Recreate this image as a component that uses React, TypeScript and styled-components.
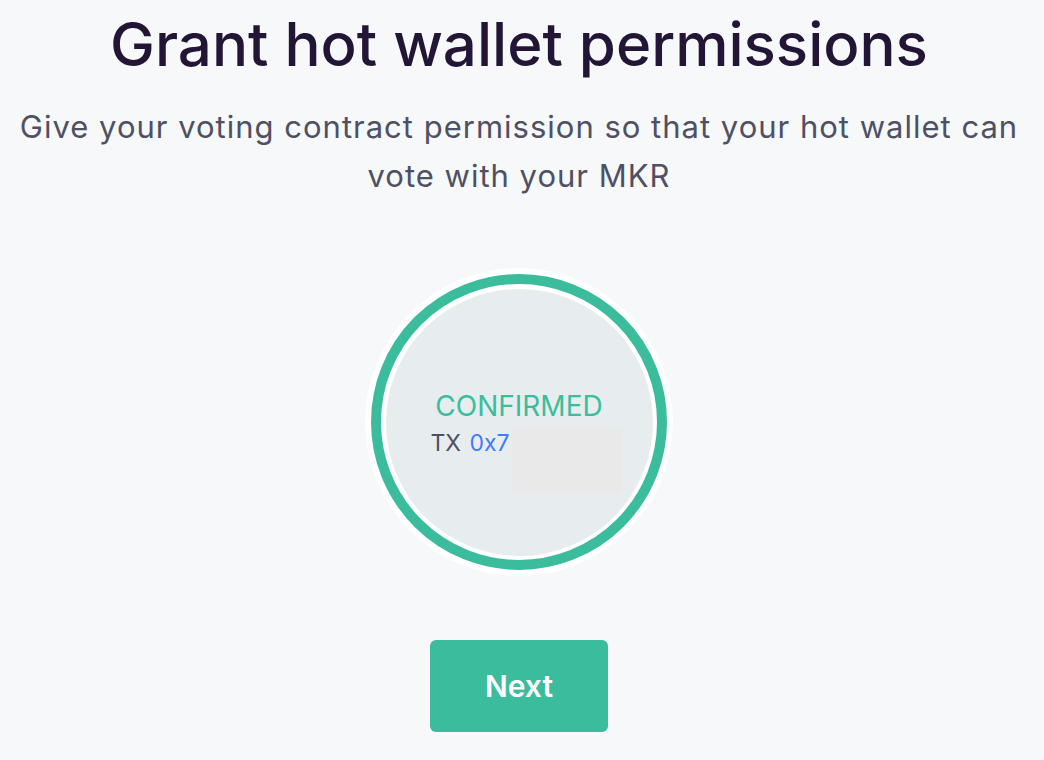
import React from "react";
import styled, { createGlobalStyle } from "styled-components";

const Global = createGlobalStyle`
  html, body { margin: 0; padding: 0; background: #f6f8f9; }
  body { font-family: Inter, "Noto Sans", sans-serif; }
`;

const Page = styled.main`
  box-sizing: border-box;
  width: 1044px;
  height: 760px;
  padding-right: 6px;
  overflow: hidden;
  display: flex;
  flex-direction: column;
  align-items: center;
  background: #f6f8f9;
`;

const Title = styled.h1`
  margin: 8px 0 0;
  font-size: 60px;
  line-height: 72px;
  font-weight: 500;
  color: #231536;
  letter-spacing: 0px;
  text-align: center;
  white-space: nowrap;
`;

const Subtitle = styled.p`
  margin: 22px 0 0;
  width: 1010px;
  font-size: 31px;
  line-height: 49px;
  font-weight: 400;
  color: #4f5063;
  letter-spacing: 1px;
  text-align: center;
`;

const Halo = styled.div`
  margin-top: 68px;
  width: 308px;
  height: 308px;
  border-radius: 50%;
  background: #ffffff;
  display: flex;
  align-items: center;
  justify-content: center;
`;

const Ring = styled.div`
  width: 276px;
  height: 276px;
  border-radius: 50%;
  border: 10px solid #3bbd9d;
  display: flex;
  align-items: center;
  justify-content: center;
`;

const Core = styled.div`
  box-sizing: border-box;
  width: 267px;
  height: 267px;
  border-radius: 50%;
  background: #e7edee;
  padding-top: 100px;
  display: flex;
  flex-direction: column;
  align-items: center;
`;

const Status = styled.div`
  font-size: 28px;
  line-height: 34px;
  font-weight: 400;
  color: #3bbd9d;
`;

const TxRow = styled.div`
  position: relative;
  align-self: flex-start;
  margin-left: 45px;
  margin-top: 6px;
  font-size: 23px;
  line-height: 28px;
  color: #4f5063;
  white-space: pre;
`;

const TxLink = styled.a`
  margin-left: 2px;
  color: #447afb;
  text-decoration: none;
`;

const Redaction = styled.span`
  position: absolute;
  left: 81px;
  top: -1px;
  width: 110px;
  height: 65px;
  background: #e9e9e9;
`;

const NextButton = styled.button`
  margin-top: 64px;
  width: 178px;
  height: 92px;
  border: none;
  border-radius: 6px;
  background: #3bbd9d;
  color: #ffffff;
  font-family: Inter, "Noto Sans", sans-serif;
  font-size: 30px;
  font-weight: 600;
  cursor: pointer;
`;

export default function App() {
  return (
    <>
      <Global />
      <Page>
        <Title>Grant hot wallet permissions</Title>
        <Subtitle>
          Give your voting contract permission so that your hot wallet can vote with your MKR
        </Subtitle>
        <Halo>
          <Ring>
            <Core>
              <Status>CONFIRMED</Status>
              <TxRow>
                {"TX "}
                <TxLink href="#">0x7</TxLink>
                <Redaction />
              </TxRow>
            </Core>
          </Ring>
        </Halo>
        <NextButton>Next</NextButton>
      </Page>
    </>
  );
}
